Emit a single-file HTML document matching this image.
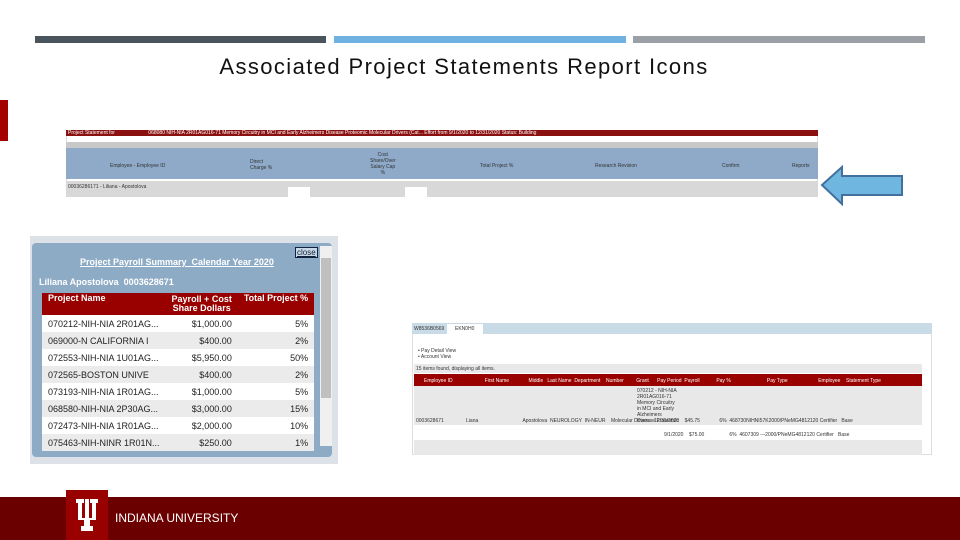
<!DOCTYPE html>
<html><head><meta charset="utf-8"><style>
body{margin:0;width:960px;height:540px;position:relative;overflow:hidden;background:#fff;font-family:"Liberation Sans",Arial,sans-serif}
.a{position:absolute}
.t{font-size:5px;color:#333;white-space:nowrap}
.pop td{font-size:9px;color:#222;padding:0 6px;height:17px;white-space:nowrap}
</style></head><body>
<div class="a" style="left:35px;top:36px;width:291px;height:7px;background:#4a545c"></div>
<div class="a" style="left:334px;top:36px;width:292px;height:7px;background:#6fb1e0"></div>
<div class="a" style="left:633px;top:36px;width:292px;height:7px;background:#9aa0a6"></div>
<div class="a" style="left:0;top:54px;width:928px;text-align:center;font-size:22px;letter-spacing:1.4px;color:#111">Associated Project Statements Report Icons</div>
<div class="a" style="left:0;top:100px;width:8px;height:41px;background:#a50000"></div>

<!-- top screenshot -->
<div class="a" style="left:66px;top:130px;width:752px;height:67px;background:#fff;border:1px solid #ddd;box-sizing:border-box"></div>
<div class="a" style="left:66px;top:130px;width:752px;height:6px;background:#8b1010"><span class="t" style="color:#fff;position:absolute;left:2px;top:0">Project Statement for &nbsp;&nbsp;&nbsp;&nbsp;&nbsp;&nbsp;&nbsp;&nbsp;&nbsp;&nbsp;&nbsp;&nbsp;&nbsp;&nbsp;&nbsp;&nbsp;&nbsp;&nbsp;&nbsp;&nbsp;&nbsp;&nbsp; 068080 NIH-NIA 2R01AG016-71 Memory Circuitry in MCI and Early Alzheimers Disease Proteomic Molecular Drivers (Cat... Effort from 9/1/2020 to 12/31/2020 Status: Building</span></div>
<div class="a" style="left:66px;top:142px;width:752px;height:6px;background:#c8c8c8"></div>
<div class="a" style="left:66px;top:148px;width:752px;height:31px;background:#8eaac8"></div>
<div class="a t" style="left:110px;top:163px">Employee - Employee ID</div>
<div class="a t" style="left:250px;top:159px">Direct<br>Charge %</div>
<div class="a t" style="left:370px;top:152px;text-align:center">Cost<br>Share/Over<br>Salary Cap<br>%</div>
<div class="a t" style="left:480px;top:163px">Total Project %</div>
<div class="a t" style="left:595px;top:163px">Research Revision</div>
<div class="a t" style="left:722px;top:163px">Confirm</div>
<div class="a t" style="left:792px;top:163px">Reports</div>
<div class="a" style="left:66px;top:181px;width:752px;height:16px;background:#d8d8d8"></div>
<div class="a t" style="left:68px;top:184px">00036286171 - Liliana - Apostolova</div>
<div class="a" style="left:288px;top:187px;width:22px;height:10px;background:#fff"></div>
<div class="a" style="left:405px;top:187px;width:22px;height:10px;background:#fff"></div>
<svg class="a" style="left:818px;top:164px" width="88" height="46"><polygon points="4,21 24,3 24,12 84,12 84,31 24,31 24,40" fill="#6fb6e0" stroke="#41719c" stroke-width="2"/></svg>

<!-- popup -->
<div class="a" style="left:30px;top:236px;width:308px;height:228px;background:#dde2e8"></div>
<div class="a" style="left:32px;top:243px;width:300px;height:214px;background:#8eabc5;border-radius:4px"></div>
<div class="a" style="left:80px;top:257px;font-size:9px;font-weight:bold;color:#fff;text-decoration:underline">Project Payroll Summary &nbsp;Calendar Year 2020</div>
<div class="a" style="left:295px;top:247px;font-size:8px;color:#123;background:#c8d8e8;border:1px solid #124;padding:0 1px;text-decoration:underline">close</div>
<div class="a" style="left:39px;top:277px;font-size:9px;font-weight:bold;color:#fff">Liliana Apostolova &nbsp;0003628671</div>
<div class="a" style="left:320px;top:246px;width:12px;height:200px;background:#f0f0f0"></div>
<div class="a" style="left:321px;top:258px;width:10px;height:140px;background:#c0c0c0"></div>
<table class="a pop" style="left:42px;top:293px;width:268px;border-collapse:collapse">
<tr style="background:#990000"><td style="color:#fff;font-weight:bold;vertical-align:top;height:22px">Project Name</td><td style="color:#fff;font-weight:bold;text-align:center;line-height:9px">Payroll + Cost<br>Share Dollars</td><td style="color:#fff;font-weight:bold;text-align:right;vertical-align:top">Total Project %</td></tr>
<tr style="background:#fff"><td>070212-NIH-NIA 2R01AG...</td><td style="text-align:right">$1,000.00</td><td style="text-align:right">5%</td></tr>
<tr style="background:#ebebeb"><td>069000-N CALIFORNIA I</td><td style="text-align:right">$400.00</td><td style="text-align:right">2%</td></tr>
<tr style="background:#fff"><td>072553-NIH-NIA 1U01AG...</td><td style="text-align:right">$5,950.00</td><td style="text-align:right">50%</td></tr>
<tr style="background:#ebebeb"><td>072565-BOSTON UNIVE</td><td style="text-align:right">$400.00</td><td style="text-align:right">2%</td></tr>
<tr style="background:#fff"><td>073193-NIH-NIA 1R01AG...</td><td style="text-align:right">$1,000.00</td><td style="text-align:right">5%</td></tr>
<tr style="background:#ebebeb"><td>068580-NIH-NIA 2P30AG...</td><td style="text-align:right">$3,000.00</td><td style="text-align:right">15%</td></tr>
<tr style="background:#fff"><td>072473-NIH-NIA 1R01AG...</td><td style="text-align:right">$2,000.00</td><td style="text-align:right">10%</td></tr>
<tr style="background:#ebebeb"><td>075463-NIH-NINR 1R01N...</td><td style="text-align:right">$250.00</td><td style="text-align:right">1%</td></tr>
</table>

<!-- right screenshot -->
<div class="a" style="left:412px;top:323px;width:520px;height:132px;background:#fff;border:1px solid #ddd;box-sizing:border-box"></div>
<div class="a" style="left:412px;top:323px;width:520px;height:11px;background:#c9dbe6"></div>
<div class="a" style="left:447px;top:324px;width:36px;height:10px;background:#fff"></div>
<div class="a t" style="left:414px;top:326px">W8536B0569</div>
<div class="a t" style="left:455px;top:326px">EKN0H0</div>
<div class="a t" style="left:418px;top:348px">• Pay Detail View<br>• Account View</div>
<div class="a" style="left:414px;top:364px;width:508px;height:9px;background:#e8e8e8"><span class="t" style="position:absolute;left:2px;top:2px">15 items found, displaying all items.</span></div>
<div class="a" style="left:414px;top:374px;width:508px;height:12px;background:#990000"></div>
<div class="a t" style="left:424px;top:378px;color:#fff">Employee ID &nbsp;&nbsp;&nbsp;&nbsp;&nbsp;&nbsp;&nbsp;&nbsp;&nbsp;&nbsp;&nbsp;&nbsp;&nbsp;&nbsp;&nbsp;&nbsp;&nbsp;&nbsp;&nbsp;&nbsp;&nbsp; First Name &nbsp;&nbsp;&nbsp;&nbsp;&nbsp;&nbsp;&nbsp;&nbsp;&nbsp;&nbsp;&nbsp;&nbsp; Middle &nbsp; Last Name &nbsp;Department &nbsp;&nbsp; Number &nbsp;&nbsp;&nbsp;&nbsp;&nbsp;&nbsp;&nbsp; Grant &nbsp;&nbsp;&nbsp;&nbsp; Pay Period &nbsp;Payroll &nbsp;&nbsp;&nbsp;&nbsp;&nbsp;&nbsp;&nbsp;&nbsp;&nbsp;&nbsp; Pay % &nbsp;&nbsp;&nbsp;&nbsp;&nbsp;&nbsp;&nbsp;&nbsp;&nbsp;&nbsp;&nbsp;&nbsp;&nbsp;&nbsp;&nbsp;&nbsp;&nbsp;&nbsp;&nbsp;&nbsp;&nbsp;&nbsp;&nbsp;&nbsp; Pay Type &nbsp;&nbsp;&nbsp;&nbsp;&nbsp;&nbsp;&nbsp;&nbsp;&nbsp;&nbsp;&nbsp;&nbsp;&nbsp;&nbsp;&nbsp;&nbsp;&nbsp;&nbsp;&nbsp;&nbsp; Employee &nbsp;&nbsp; Statement Type</div>
<div class="a" style="left:414px;top:386px;width:508px;height:39px;background:#e8e8e8"></div>
<div class="a" style="left:414px;top:440px;width:508px;height:15px;background:#e8e8e8"></div>
<div class="a t" style="left:416px;top:418px">0003628671 &nbsp;&nbsp;&nbsp;&nbsp;&nbsp;&nbsp;&nbsp;&nbsp;&nbsp;&nbsp;&nbsp;&nbsp;&nbsp;&nbsp; Liana &nbsp;&nbsp;&nbsp;&nbsp;&nbsp;&nbsp;&nbsp;&nbsp;&nbsp;&nbsp;&nbsp;&nbsp;&nbsp;&nbsp;&nbsp;&nbsp;&nbsp;&nbsp;&nbsp;&nbsp;&nbsp;&nbsp;&nbsp;&nbsp;&nbsp;&nbsp;&nbsp;&nbsp;&nbsp;&nbsp; Apostolova &nbsp;NEUROLOGY &nbsp;IN-NEUR &nbsp;&nbsp; Molecular Drivers &nbsp; 12/31/2020 &nbsp;&nbsp; $45.75 &nbsp;&nbsp;&nbsp;&nbsp;&nbsp;&nbsp;&nbsp;&nbsp;&nbsp;&nbsp;&nbsp;&nbsp; 6% &nbsp;468730NIHNI57K2000/PNeMG4812120 Certifier &nbsp; Base</div>
<div class="a t" style="left:637px;top:388px;line-height:6px">070212 - NIH-NIA<br>2R01AG016-71<br>Memory Circuitry<br>in MCI and Early<br>Alzheimers<br>Disease Proteomic</div>
<div class="a t" style="left:664px;top:432px">9/1/2020 &nbsp;&nbsp; $75.00 &nbsp;&nbsp;&nbsp;&nbsp;&nbsp;&nbsp;&nbsp;&nbsp;&nbsp;&nbsp;&nbsp;&nbsp;&nbsp;&nbsp;&nbsp;&nbsp; 6% &nbsp;4607309 ---2000/PNeMG4812120 Certifier &nbsp; Base</div>

<!-- footer -->
<div class="a" style="left:0;top:497px;width:960px;height:43px;background:#6b0000"></div>
<div class="a" style="left:66px;top:490px;width:42px;height:50px;background:#990000"></div>
<svg class="a" style="left:72px;top:496px" width="30" height="38"><path d="M4 3h8v4h-2v15h3V3h4v19h3V7h-2V3h8v4h-2v17h-6v6h3v5h-12v-5h3v-6h-6V7h-2z" fill="#fff"/></svg>
<div class="a" style="left:115px;top:511px;font-size:12px;color:#fff">INDIANA UNIVERSITY</div>
</body></html>
